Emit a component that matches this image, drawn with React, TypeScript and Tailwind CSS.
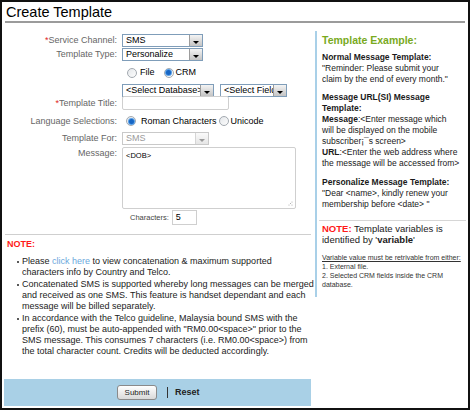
import React from "react";

function Arrow({ muted }: { muted?: boolean }) {
  return (
    <svg width="6" height="3" viewBox="0 0 6 3">
      <path d="M0 0H6L3 3Z" fill={muted ? "#9a9a9a" : "#000"} />
    </svg>
  );
}

function Select({ value, width, muted }: { value: string; width: string; muted?: boolean }) {
  return (
    <div
      className={`flex h-[13px] items-stretch bg-white border ${width} ${
        muted ? "border-[#c9c9c9]" : "border-[#7f9db9]"
      }`}
    >
      <span
        className={`flex-1 overflow-hidden whitespace-nowrap pl-[3px] text-[9px] leading-[11px] ${
          muted ? "text-[#9a9a9a]" : "text-black"
        }`}
      >
        {value}
      </span>
      <span
        className={`flex w-[13px] items-end justify-center border-l pb-[2px] bg-gradient-to-b ${
          muted
            ? "border-[#d5d5d5] from-[#fafafa] to-[#e6e6e6]"
            : "border-[#9c9c9c] from-[#f4f4f4] to-[#c4c4c4]"
        }`}
      >
        <Arrow muted={muted} />
      </span>
    </div>
  );
}

function Radio({ on }: { on?: boolean }) {
  return (
    <span className="flex h-[10px] w-[10px] items-center justify-center rounded-full border border-[#a3a9b0] bg-gradient-to-br from-[#e4e7ea] to-[#fdfdfd]">
      {on && <span className="h-[5px] w-[5px] rounded-full bg-[#1666c5] ring-1 ring-[#5aa0e6]" />}
    </span>
  );
}

function Label({ text, req, className = "" }: { text: string; req?: boolean; className?: string }) {
  return (
    <div className={`w-[113px] whitespace-nowrap text-right text-[9px] leading-[11px] text-[#666] ${className}`}>
      {req && <span className="text-[#e01b1b]">*</span>}
      {text}
    </div>
  );
}

function Bullet({ children }: { children: React.ReactNode }) {
  return (
    <li className="flex">
      <span className="mr-[3px] mt-[5px] h-[2px] w-[2px] shrink-0 rounded-full bg-[#222]" />
      <span className="whitespace-nowrap">{children}</span>
    </li>
  );
}

export default function App() {
  return (
    <div className="h-[410px] w-[470px] border-2 border-[#111] bg-white font-['Liberation_Sans',Arial,sans-serif] flex flex-col">
      {/* Header */}
      <div className="h-[19px] pl-[4px] pt-[2px] text-[14.5px] leading-[17px] text-black">Create Template</div>
      <div className="mx-[3px] h-[2px] shrink-0 bg-[#9b9b9b]" />

      <div className="flex flex-1">
        {/* Left - Form */}
        <div className="ml-[2px] flex w-[307px] flex-col">
          <div className="mt-[10px] flex h-[14px] items-center">
            <Label text="Service Channel:" req />
            <div className="ml-[5px]">
              <Select value="SMS" width="w-[81px]" />
            </div>
          </div>
          <div className="flex h-[14px] items-center">
            <Label text="Template Type:" />
            <div className="ml-[5px]">
              <Select value="Personalize" width="w-[81px]" />
            </div>
          </div>
          <div className="flex h-[23px] items-center">
            <div className="w-[113px]" />
            <div className="ml-[5px] flex items-center pl-[5px] text-[9px] leading-[11px] text-black">
              <Radio />
              <span className="ml-[3px]">File</span>
              <span className="ml-[9px]">
                <Radio on />
              </span>
              <span className="ml-[2px]">CRM</span>
            </div>
          </div>
          <div className="flex h-[12px] items-center">
            <div className="w-[113px]" />
            <div className="ml-[5px] flex gap-[6px]">
              <Select value="<Select Database>" width="w-[92px]" />
              <Select value="<Select Field>" width="w-[67px]" />
            </div>
          </div>
          <div className="flex h-[14px] items-center">
            <Label text="Template Title:" req />
            <div className="ml-[5px] h-[14px] w-[107px] rounded-[2px] border border-[#cfcfcf] bg-white" />
          </div>
          <div className="flex h-[22px] items-center">
            <Label text="Language Selections:" />
            <div className="ml-[5px] flex items-center pl-[4px] text-[9px] leading-[11px] text-black">
              <Radio on />
              <span className="ml-[5px]">Roman Characters</span>
              <span className="ml-[2px]">
                <Radio />
              </span>
              <span className="ml-[2px]">Unicode</span>
            </div>
          </div>
          <div className="flex h-[13px] items-center">
            <Label text="Template For:" />
            <div className="ml-[5px]">
              <Select value="SMS" width="w-[87px]" muted />
            </div>
          </div>
          <div className="mt-[2px] flex items-start">
            <Label text="Message:" className="pt-[1px]" />
            <div className="relative ml-[5px] h-[62px] w-[174px] rounded-[2px] border border-[#cfcfcf] bg-white px-[3px] pt-[3px] text-[7.5px] leading-[9px] text-black">
              &lt;DOB&gt;
              <svg className="absolute bottom-[2px] right-[2px]" width="5" height="5" viewBox="0 0 5 5">
                <circle cx="4" cy="1" r="0.5" fill="#999" />
                <circle cx="4" cy="4" r="0.5" fill="#999" />
                <circle cx="1" cy="4" r="0.5" fill="#999" />
                <circle cx="2.5" cy="2.5" r="0.5" fill="#999" />
              </svg>
            </div>
          </div>
          <div className="mt-[1px] flex h-[15px] items-center">
            <div className="ml-[126px] text-[7.5px] leading-[9px] text-[#444]">Characters:</div>
            <div className="ml-[3px] h-[15px] w-[25px] border border-[#cfcfcf] bg-white pl-[3px] text-[9px] leading-[13px] text-black">
              5
            </div>
          </div>

          <div className="ml-[1px] mt-[9px] h-px bg-[#cfcfcf]" />

          <div className="ml-[3px] mt-[4px] text-[9px] font-bold leading-[11px] text-[#ff1a1a]">NOTE:</div>

          <ul className="ml-[13px] mt-[6px] flex flex-col gap-[1px] text-[9px] leading-[11px] text-[#222]">
            <Bullet>
              Please <span className="text-[#6aa7dc]">click here</span> to view concatenation &amp; maximum supported
              <br />
              characters info by Country and Telco.
            </Bullet>
            <Bullet>
              Concatenated SMS is supported whereby long messages can be merged
              <br />
              and received as one SMS. This feature is handset dependant and each
              <br />
              message will be billed separately.
            </Bullet>
            <Bullet>
              In accordance with the Telco guideline, Malaysia bound SMS with the
              <br />
              prefix (60), must be auto-appended with "RM0.00&lt;space&gt;" prior to the
              <br />
              SMS message. This consumes 7 characters (i.e. RM0.00&lt;space&gt;) from
              <br />
              the total character count. Credits will be deducted accordingly.
            </Bullet>
          </ul>

          {/* Action bar */}
          <div className="mb-[2px] mt-auto flex h-[27px] items-center bg-[#a9d0e6] pl-[113px]">
            <button className="h-[15px] w-[40px] rounded-[3px] border border-[#8a8a8a] bg-gradient-to-b from-[#ffffff] to-[#d9d9d9] text-[8px] leading-[13px] text-[#222]">
              Submit
            </button>
            <span className="ml-[10px] h-[11px] w-px bg-[#333]" />
            <span className="ml-[7px] text-[9px] font-bold leading-[11px] text-[#222]">Reset</span>
          </div>
        </div>

        {/* Right - Examples */}
        <div className="ml-[4px] mt-[8px] flex h-[266px] w-[151px] flex-col self-start border-l-2 border-[#a9d0e8]">
          <div className="pl-[5px] pt-[3px] text-[10.5px] font-bold leading-[13px] text-[#79aa1e]">Template Example:</div>

          <div className="mt-[5px] whitespace-nowrap pl-[5px] text-[8.5px] leading-[11px] text-[#1a1a1a]">
            <div className="font-bold">Normal Message Template:</div>
            <div>
              "Reminder: Please submit your
              <br />
              claim by the end of every month."
            </div>
          </div>

          <div className="mt-[7px] whitespace-nowrap pl-[5px] text-[8.5px] leading-[11px] text-[#1a1a1a]">
            <div className="font-bold">
              Message URL(SI) Message
              <br />
              Template:
            </div>
            <div>
              <span className="font-bold">Message</span>:&lt;Enter message which
              <br />
              will be displayed on the mobile
              <br />
              subscriber¡¯s screen&gt;
              <br />
              <span className="font-bold">URL</span>:&lt;Enter the web address where
              <br />
              the message will be accessed from&gt;
            </div>
          </div>

          <div className="mt-[8px] whitespace-nowrap pl-[5px] text-[8.5px] leading-[11px] text-[#1a1a1a]">
            <div className="font-bold">Personalize Message Template:</div>
            <div>
              "Dear &lt;name&gt;, kindly renew your
              <br />
              membership before &lt;date&gt; "
            </div>
          </div>

          <div className="ml-[2px] mt-[10px] h-px bg-[#d6d6d6]" />

          <div className="mt-[2px] whitespace-nowrap pl-[5px] text-[9.5px] leading-[11px] text-[#1a1a1a]">
            <span className="font-bold text-[#ff1a1a]">NOTE:</span> Template variables is
            <br />
            identified by '<span className="font-bold">variable</span>'
          </div>

          <div className="mt-[8px] whitespace-nowrap pl-[5px] text-[7px] leading-[9px] text-[#333]">
            <div className="underline">Variable value must be retrivable from either:</div>
            <div>1. External file.</div>
            <div>
              2. Selected CRM fields inside the CRM
              <br />
              database.
            </div>
          </div>
        </div>
      </div>
    </div>
  );
}
